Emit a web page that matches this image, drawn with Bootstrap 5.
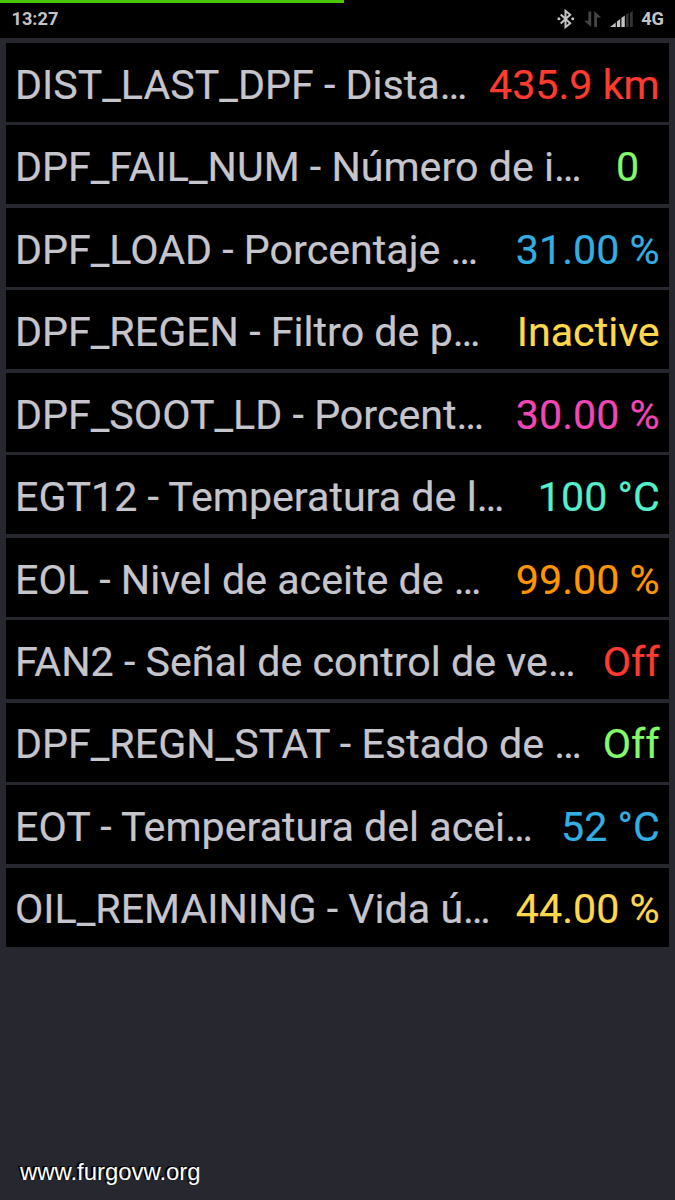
<!DOCTYPE html>
<html lang="es">
<head>
<meta charset="utf-8">
<meta name="viewport" content="width=device-width, initial-scale=1">
<title>DPF</title>
<link href="https://cdn.jsdelivr.net/npm/bootstrap@5.3.0/dist/css/bootstrap.min.css" rel="stylesheet">
<style>
body{background:#26272f;font-family:Roboto,sans-serif;height:1200px;overflow:hidden}
.charge{height:3px;background:#000}
.charge div{width:344px;height:3px;background:#45c800}
.status{height:35px;background:#000;color:#c4c4c4;font-size:18.2px;font-weight:700;line-height:32px;padding:0 11px 0 11.5px}
.readings{padding:5px 6px 0;gap:3.8px}
.reading{height:78.7px;background:#000;color:#c6c5cc;font-size:41.2px;line-height:78.7px;padding:2.6px 9.3px 0 9px;white-space:nowrap;-webkit-text-stroke:.2px currentColor}
.red{color:#ff3b30}.green{color:#84f96b}.blue{color:#34ade0}.yellow{color:#ffd84d}
.pink{color:#f047b4}.mint{color:#54f0cc}.orange{color:#ff9500}
.site{color:#fff;font:23.9px/28px "Liberation Sans",sans-serif;padding:0 0 14px 20px;text-shadow:-1px -1px 0 #000,-2px -1px 0 #000}
</style>
</head>
<body class="d-flex flex-column">
<div class="charge"><div></div></div>
<header class="status d-flex justify-content-between">
<span>13:27</span>
<span class="d-flex">
<svg width="84" height="33" viewBox="556.8 3 84 33">
<path d="M560.5 14.5 570 23.3 565.3 27.2V10.8L570 14.7 560.5 23.5" fill="none" stroke="#c4c4c4" stroke-width="2"/>
<circle cx="558.7" cy="18.8" r="1.5" fill="#c4c4c4"/><circle cx="572.5" cy="18.8" r="1.5" fill="#c4c4c4"/>
<path d="M588.2 11.5h2.8V27L584 20.8h4.2zM594 27h2.8V17.500H601L594 11z" fill="#454545"/>
<path d="M610 27 615.5 22.5V27zM616.7 27V21.5L620 19V27zM621.2 27V18L624.6 15.5V27z" fill="#c4c4c4"/>
<path d="M625.8 27V14.8L628.4 13V27zM629.8 27V12.8L632.6 11V27z" fill="#333"/>
</svg>
<span>4G</span></span>
</header>
<main class="readings d-flex flex-column">
<div class="reading d-flex justify-content-between"><span>DIST_LAST_DPF - Dista…</span><span class="red">435.9 km</span></div>
<div class="reading d-flex justify-content-between"><span>DPF_FAIL_NUM - Número de i…</span><span class="green">0&nbsp;&nbsp;</span></div>
<div class="reading d-flex justify-content-between"><span>DPF_LOAD - Porcentaje …</span><span class="blue">31.00 %</span></div>
<div class="reading d-flex justify-content-between"><span>DPF_REGEN - Filtro de p…</span><span class="yellow">Inactive</span></div>
<div class="reading d-flex justify-content-between"><span>DPF_SOOT_LD - Porcent…</span><span class="pink">30.00 %</span></div>
<div class="reading d-flex justify-content-between"><span>EGT12 - Temperatura de l…</span><span class="mint">100 °C</span></div>
<div class="reading d-flex justify-content-between"><span>EOL - Nivel de aceite de …</span><span class="orange">99.00 %</span></div>
<div class="reading d-flex justify-content-between"><span>FAN2 - Señal de control de ve…</span><span class="red">Off</span></div>
<div class="reading d-flex justify-content-between"><span>DPF_REGN_STAT - Estado de …</span><span class="green">Off</span></div>
<div class="reading d-flex justify-content-between"><span>EOT - Temperatura del acei…</span><span class="blue">52 °C</span></div>
<div class="reading d-flex justify-content-between"><span>OIL_REMAINING - Vida ú…</span><span class="yellow">44.00 %</span></div>
</main>
<footer class="site mt-auto">www.furgovw.org</footer>
<script src="https://cdn.jsdelivr.net/npm/bootstrap@5.3.0/dist/js/bootstrap.bundle.min.js"></script>
</body>
</html>
